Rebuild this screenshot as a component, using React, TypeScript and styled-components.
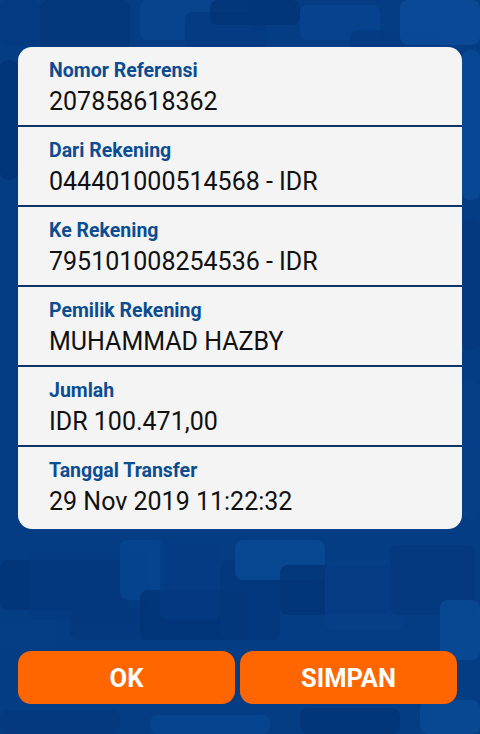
import React from "react";
import styled, { createGlobalStyle } from "styled-components";

const Global = createGlobalStyle`
  html, body { margin: 0; padding: 0; }
  body { background: #053d85; font-family: Roboto, "Noto Sans", sans-serif; }
  * { box-sizing: border-box; }
`;

const Screen = styled.div`
  position: relative;
  width: 480px;
  height: 734px;
  overflow: hidden;
  background: #053d85;
`;

const Backdrop = styled.svg`
  position: absolute;
  inset: 0;
  width: 480px;
  height: 734px;
  z-index: 0;
`;

const Content = styled.div`
  position: relative;
  z-index: 1;
  display: flex;
  flex-direction: column;
  padding: 47px 18px 0 18px;
  height: 734px;
`;

const Card = styled.div`
  width: 444px;
  background: #f4f4f4;
  border-radius: 14px;
  overflow: hidden;
`;

const Row = styled.div<{ $last?: boolean }>`
  height: ${(p) => (p.$last ? 82 : 80)}px;
  padding: 12px 0 0 31px;
  border-bottom: ${(p) => (p.$last ? "none" : "2px solid #0e3466")};
  display: flex;
  flex-direction: column;
`;

const Label = styled.div`
  font-family: Roboto, sans-serif;
  font-weight: 700;
  font-size: 19.5px;
  line-height: 24px;
  color: #0c4d92;
`;

const Value = styled.div`
  margin-top: 3px;
  font-family: Roboto, sans-serif;
  font-weight: 400;
  font-size: 25px;
  line-height: 32px;
  color: #111;
`;

const Actions = styled.div`
  margin-top: 122px;
  display: flex;
  gap: 5px;
  width: 439px;
`;

const Button = styled.button`
  flex: 1;
  height: 53px;
  border: none;
  border-radius: 13px;
  background: #ff6600;
  color: #fff;
  font-family: Roboto, sans-serif;
  font-weight: 700;
  font-size: 25.5px;
  padding: 0;
`;

const rows = [
  ["Nomor Referensi", "207858618362"],
  ["Dari Rekening", "044401000514568 - IDR"],
  ["Ke Rekening", "795101008254536 - IDR"],
  ["Pemilik Rekening", "MUHAMMAD HAZBY"],
  ["Jumlah", "IDR 100.471,00"],
  ["Tanggal Transfer", "29 Nov 2019 11:22:32"],
];

const squares: [number, number, number, number, string][] = [
  [0, 0, 40, 45, "#04397f"],
  [40, 0, 90, 50, "#033777"],
  [140, 0, 110, 40, "#08468f"],
  [185, 12, 80, 60, "#043a80"],
  [210, 0, 90, 25, "#033574"],
  [300, 5, 80, 35, "#074390"],
  [350, 30, 90, 40, "#04397f"],
  [400, 0, 80, 45, "#0a4c98"],
  [0, 60, 18, 120, "#033574"],
  [462, 50, 18, 150, "#094a96"],
  [462, 220, 18, 130, "#04387d"],
  [462, 380, 18, 140, "#063f87"],
  [0, 560, 130, 50, "#033574"],
  [30, 550, 120, 70, "#043a80"],
  [70, 610, 150, 30, "#04387e"],
  [120, 540, 45, 60, "#084691"],
  [140, 590, 110, 50, "#033574"],
  [160, 540, 60, 80, "#053b83"],
  [220, 560, 60, 80, "#04377c"],
  [235, 540, 90, 40, "#094a95"],
  [280, 565, 110, 50, "#033574"],
  [325, 560, 80, 70, "#063f88"],
  [390, 545, 85, 70, "#04387e"],
  [440, 600, 40, 60, "#094a95"],
  [0, 620, 60, 30, "#063e86"],
  [0, 710, 120, 24, "#04387e"],
  [150, 715, 120, 19, "#084691"],
  [300, 708, 100, 26, "#033574"],
  [420, 700, 60, 34, "#094a95"],
];

export default function App() {
  return (
    <Screen>
      <Global />
      <Backdrop viewBox="0 0 480 734" aria-hidden>
        {squares.map(([x, y, w, h, c], i) => (
          <rect key={i} x={x} y={y} width={w} height={h} rx={8} fill={c} opacity={0.8} />
        ))}
      </Backdrop>
      <Content>
        <Card>
          {rows.map(([l, v], i) => (
            <Row key={l} $last={i === rows.length - 1}>
              <Label>{l}</Label>
              <Value>{v}</Value>
            </Row>
          ))}
        </Card>
        <Actions>
          <Button>OK</Button>
          <Button>SIMPAN</Button>
        </Actions>
      </Content>
    </Screen>
  );
}
